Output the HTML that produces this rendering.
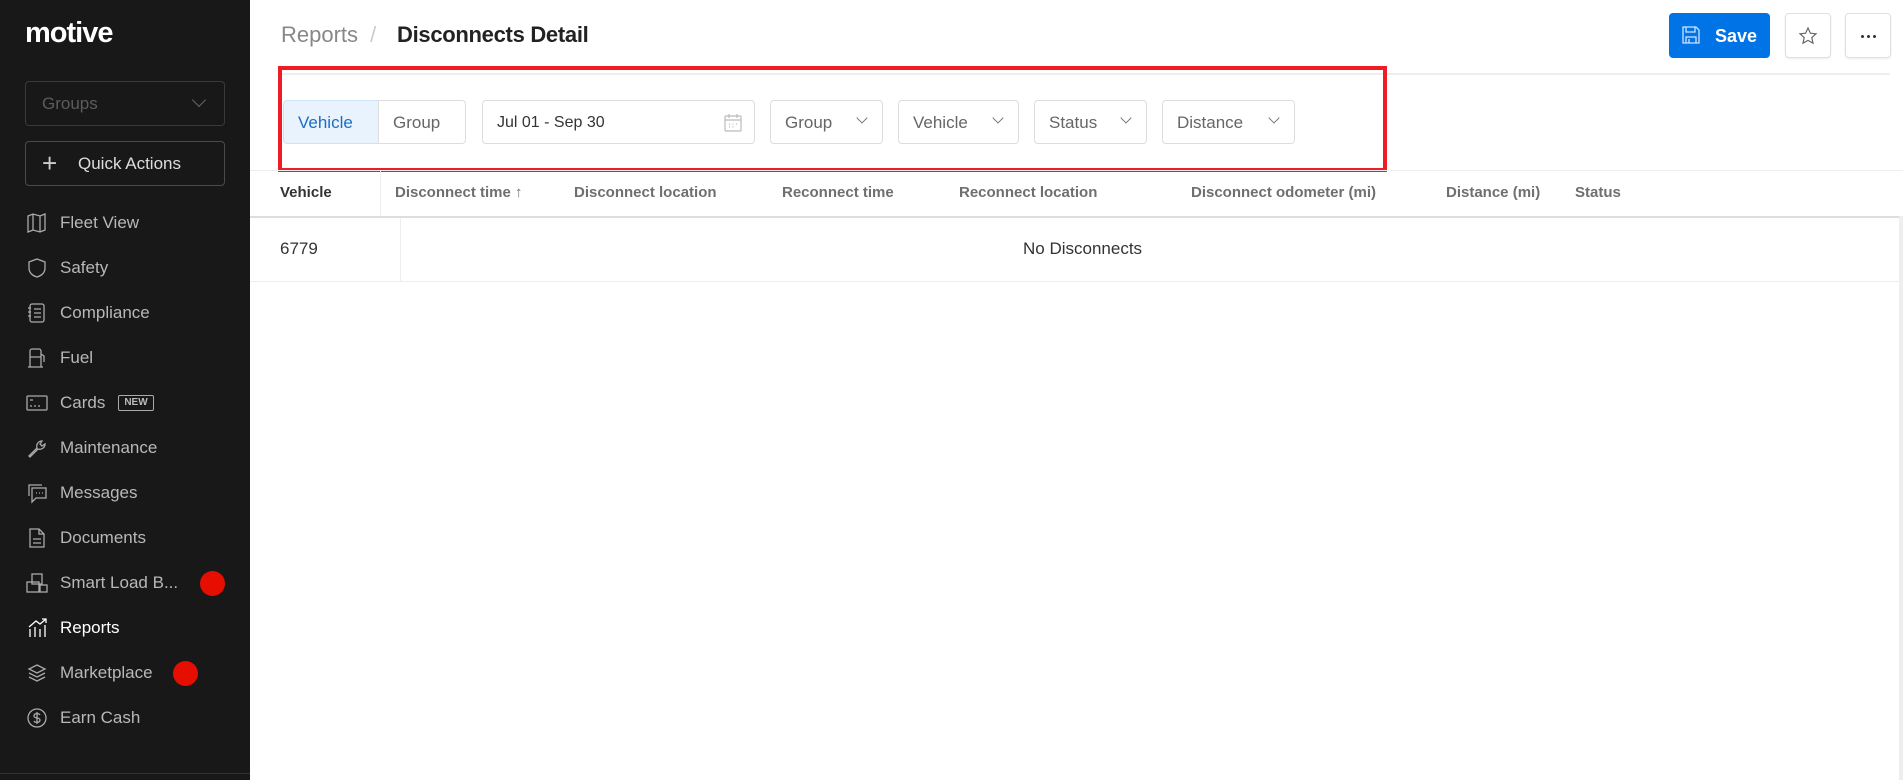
<!DOCTYPE html>
<html><head><meta charset="utf-8"><style>
*{box-sizing:border-box;margin:0;padding:0}
body{width:1903px;height:780px;overflow:hidden;background:#fff;font-family:"Liberation Sans",sans-serif;position:relative}
.sb{position:absolute;left:0;top:0;width:250px;height:780px;background:#181818}
.logo{position:absolute;left:25px;top:17px;color:#fff;font-size:29px;font-weight:bold;letter-spacing:-1px}
.grp{position:absolute;left:25px;top:81px;width:200px;height:45px;border:1px solid #3a3a3a;border-radius:4px;color:#5c5c5c;font-size:17px;padding:12px 16px}
.qa{position:absolute;left:25px;top:141px;width:200px;height:45px;border:1px solid #4a4a4a;border-radius:4px;color:#ddd;font-size:17px;padding:12px 0 0 52px}
.nav{position:absolute;left:60px;color:#b8b8b8;font-size:17px;line-height:20px}
.ic{position:absolute;left:26px;width:22px;height:22px}
.dot{position:absolute;width:25px;height:25px;border-radius:50%;background:#e50e00}
.abs{position:absolute}
.btn{position:absolute;top:100px;height:44px;border:1px solid #ddd;border-radius:4px;font-size:17px;color:#666;padding:12px 14px}
.th{position:absolute;top:184px;font-size:15px;font-weight:bold;color:#6f6f6f}
.chev{position:absolute;top:13px;right:16px;width:8px;height:8px;border-right:1.2px solid #777;border-bottom:1.2px solid #777;transform:rotate(45deg)}
</style></head><body>
<div class="sb">
<div class="logo">motive</div>
<div class="grp">Groups<span style="position:absolute;right:20px;top:13px;width:10px;height:10px;border-right:1.3px solid #666;border-bottom:1.3px solid #666;transform:rotate(45deg)"></span></div>
<div class="qa"><span style="position:absolute;left:16px;top:10px;font-size:26px;font-weight:300;line-height:22px;color:#ccc">+</span>Quick Actions</div>
<svg class="ic" style="top:212px" viewBox="0 0 22 22" fill="none" stroke="#aaa" stroke-width="1.3"><path d="M2 4l5-2 7 2 5-2v16l-5 2-7-2-5 2z M7 2v16 M14 4v16"/></svg>
<div class="nav" style="top:213px">Fleet View</div>
<svg class="ic" style="top:257px" viewBox="0 0 22 22" fill="none" stroke="#aaa" stroke-width="1.3"><path d="M11 2l8 3v6c0 5-4 8-8 9-4-1-8-4-8-9V5z"/></svg>
<div class="nav" style="top:258px">Safety</div>
<svg class="ic" style="top:302px" viewBox="0 0 22 22" fill="none" stroke="#aaa" stroke-width="1.3"><rect x="4" y="2" width="14" height="18" rx="2"/><path d="M8 7h7M8 11h7M8 15h7M2 6h3M2 10h3M2 14h3"/></svg>
<div class="nav" style="top:303px">Compliance</div>
<svg class="ic" style="top:347px" viewBox="0 0 22 22" fill="none" stroke="#aaa" stroke-width="1.3"><path d="M4 20V4a2 2 0 012-2h7a2 2 0 012 2v16M2 20h15M4 10h11M15 7l3 2v6"/></svg>
<div class="nav" style="top:348px">Fuel</div>
<svg class="ic" style="top:392px" viewBox="0 0 22 22" fill="none" stroke="#aaa" stroke-width="1.3"><rect x="1" y="4" width="20" height="14" rx="1"/><path d="M4 8h3M4 14h2M8 14h2M12 14h2"/></svg>
<div class="nav" style="top:393px">Cards</div>
<div class="abs" style="left:118px;top:395px;width:36px;height:16px;border:1px solid #aaa;border-radius:2px;color:#bbb;font-size:10px;font-weight:bold;text-align:center;line-height:14px">NEW</div>
<svg class="ic" style="top:437px" viewBox="0 0 22 22" fill="none" stroke="#aaa" stroke-width="1.3"><path d="M3 19l8-8c-1-3 1-7 5-7l-2 3 2 2 3-2c0 4-4 6-7 5l-8 8z"/></svg>
<div class="nav" style="top:438px">Maintenance</div>
<svg class="ic" style="top:482px" viewBox="0 0 22 22" fill="none" stroke="#aaa" stroke-width="1.3"><path d="M3 14V3h13M6 6h14v10H10l-4 4z M10 11h1M13 11h1M16 11h1"/></svg>
<div class="nav" style="top:483px">Messages</div>
<svg class="ic" style="top:527px" viewBox="0 0 22 22" fill="none" stroke="#aaa" stroke-width="1.3"><path d="M4 2h9l5 5v13H4z M13 2v5h5 M7 12h8M7 16h8"/></svg>
<div class="nav" style="top:528px">Documents</div>
<svg class="ic" style="top:572px" viewBox="0 0 22 22" fill="none" stroke="#aaa" stroke-width="1.3"><rect x="6" y="2" width="10" height="10"/><rect x="1" y="10" width="12" height="10"/><rect x="14" y="13" width="7" height="7"/></svg>
<div class="nav" style="top:573px">Smart Load B...</div>
<div class="dot" style="left:200px;top:571px"></div>
<svg class="ic" style="top:617px" viewBox="0 0 22 22" fill="none" stroke="#fff" stroke-width="1.3"><path d="M4 20v-8M9 20v-10M14 20v-8M19 20V8M3 10l7-6 4 3 6-5M16 2h4v4"/></svg>
<div class="nav" style="top:618px;color:#fff">Reports</div>
<svg class="ic" style="top:662px" viewBox="0 0 22 22" fill="none" stroke="#aaa" stroke-width="1.3"><path d="M11 3l8 4-8 4-8-4z M3 11l8 4 8-4 M3 15l8 4 8-4"/></svg>
<div class="nav" style="top:663px">Marketplace</div>
<div class="dot" style="left:173px;top:661px"></div>
<svg class="ic" style="top:707px" viewBox="0 0 22 22" fill="none" stroke="#aaa" stroke-width="1.3"><circle cx="11" cy="11" r="9"/><path d="M14 8c-1-2-6-2-6 1s6 1 6 4-5 3-6 1M11 5v12"/></svg>
<div class="nav" style="top:708px">Earn Cash</div>
<div class="abs" style="left:0;top:773px;width:250px;height:1px;background:#333"></div>
</div>

<div class="abs" style="left:281px;top:22px;font-size:22px;color:#888">Reports <span style="color:#ccc;margin:0 6px">/</span></div>
<div class="abs" style="left:397px;top:22px;font-size:22px;color:#222;font-weight:bold;letter-spacing:-0.3px">Disconnects Detail</div>
<div class="abs" style="left:1669px;top:13px;width:101px;height:45px;background:#0073e6;border-radius:4px;color:#fff;font-weight:bold;font-size:18px;padding:13px 0 0 46px">Save
<svg class="abs" style="left:12px;top:12px" width="20" height="20" viewBox="0 0 20 20" fill="none" stroke="#cfe3fa" stroke-width="1.3"><path d="M2 2h13l3 3v13H2z M5 2v5h9V2 M5 18v-6h10v6 M8 14v4"/></svg></div>
<div class="abs" style="left:1785px;top:13px;width:46px;height:45px;border:1px solid #e0e0e0;border-radius:4px;box-shadow:0 1px 2px rgba(0,0,0,.08)"><svg class="abs" style="left:12px;top:12px" width="20" height="20" viewBox="0 0 20 20" fill="none" stroke="#666" stroke-width="1.2"><path d="M10 2l2.4 5.2 5.6.6-4.2 3.8 1.2 5.6L10 14.4 5 17.2l1.2-5.6L2 7.8l5.6-.6z"/></svg></div>
<div class="abs" style="left:1845px;top:13px;width:46px;height:45px;border:1px solid #e0e0e0;border-radius:4px;box-shadow:0 1px 2px rgba(0,0,0,.08)">
<span class="abs" style="left:15px;top:21px;width:3px;height:3px;border-radius:50%;background:#333"></span>
<span class="abs" style="left:21px;top:21px;width:3px;height:3px;border-radius:50%;background:#333"></span>
<span class="abs" style="left:27px;top:21px;width:3px;height:3px;border-radius:50%;background:#333"></span></div>
<div class="abs" style="left:280px;top:73px;width:1610px;height:2px;background:#eee"></div>

<div class="btn" style="left:283px;width:96px;background:#e8f3fe;border-color:#cde3f8;color:#1f6cc4;border-radius:4px 0 0 4px">Vehicle</div>
<div class="btn" style="left:378px;width:88px;border-radius:0 4px 4px 0">Group</div>
<div class="btn" style="left:482px;width:273px;color:#333;font-size:16px;padding-top:13px">Jul 01 - Sep 30
<svg class="abs" style="right:12px;top:12px" width="18" height="20" viewBox="0 0 18 20" fill="none" stroke="#bbb" stroke-width="1.2"><rect x="1" y="3" width="16" height="15" rx="1"/><path d="M1 7h16M5 1v4M13 1v4M5 11h1M8.5 11h1M12 11h1M5 14h1M8.5 14h1"/></svg></div>
<div class="btn" style="left:770px;width:113px">Group<span class="chev"></span></div>
<div class="btn" style="left:898px;width:121px">Vehicle<span class="chev"></span></div>
<div class="btn" style="left:1034px;width:113px">Status<span class="chev"></span></div>
<div class="btn" style="left:1162px;width:133px">Distance<span class="chev"></span></div>
<div class="abs" style="left:278px;top:66px;width:1109px;height:106px;border:4px solid #ee1c25"></div>

<div class="abs" style="left:250px;top:170px;width:1653px;height:1px;background:#eee"></div>
<div class="abs" style="left:380px;top:171px;width:1px;height:45px;background:#eee"></div>
<div class="th" style="left:280px;color:#333">Vehicle</div>
<div class="th" style="left:395px">Disconnect time <span style="font-weight:normal">↑</span></div>
<div class="th" style="left:574px">Disconnect location</div>
<div class="th" style="left:782px">Reconnect time</div>
<div class="th" style="left:959px">Reconnect location</div>
<div class="th" style="left:1191px">Disconnect odometer (mi)</div>
<div class="th" style="left:1446px">Distance (mi)</div>
<div class="th" style="left:1575px">Status</div>
<div class="abs" style="left:250px;top:216px;width:1650px;height:2px;background:#ddd"></div>
<div class="abs" style="left:400px;top:218px;width:1px;height:64px;background:#eee"></div>
<div class="abs" style="left:280px;top:239px;font-size:17px;color:#333">6779</div>
<div class="abs" style="left:1023px;top:239px;font-size:17px;color:#333">No Disconnects</div>
<div class="abs" style="left:250px;top:281px;width:1650px;height:1px;background:#eee"></div>
<div class="abs" style="left:1899px;top:216px;width:4px;height:564px;background:#eee"></div>
</body></html>
